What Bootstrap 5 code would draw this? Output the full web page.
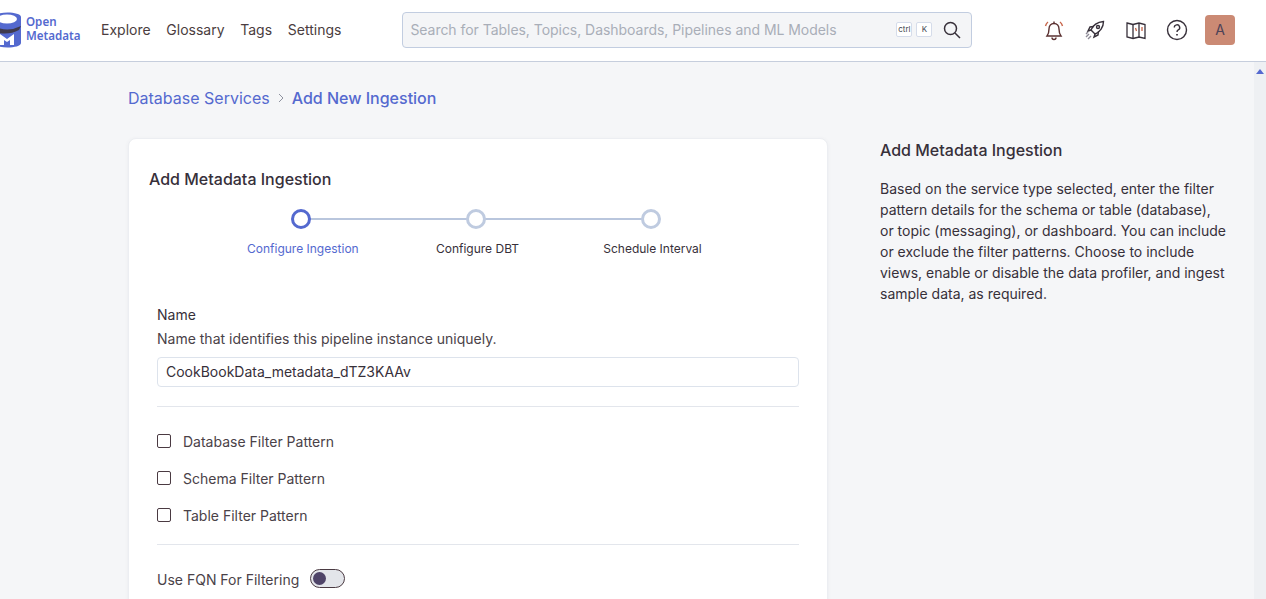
<!DOCTYPE html>
<html lang="en">
<head>
<meta charset="UTF-8">
<title>Add New Ingestion</title>
<link href="https://cdn.jsdelivr.net/npm/bootstrap@5.3.0/dist/css/bootstrap.min.css" rel="stylesheet">
<style>
html, body { height: 100%; overflow: hidden; }
body { font-family: Inter, "Liberation Sans", sans-serif; font-size: 14px; color: #37352f; background: #f5f6f8; }
.app-shell { height: 599px; display: flex; flex-direction: column; overflow: hidden; }
.top-bar { height: 62px; flex: none; background: #fff; border-bottom: 1px solid #c6cedd; padding: 0 31px 2px 0; }
.logo-box { width: 101px; height: 60px; flex: none; overflow: hidden; }
.logo-words { font-family: "Noto Sans", sans-serif; font-weight: 600; font-size: 11.6px; line-height: 14px; color: #5469cf; margin: 0 0 1px 5px; }
.top-link { color: #4a3d40; font-size: 14px; text-decoration: none; }
.top-links { gap: 15.7px; }
.find-box { width: 570px; height: 36px; margin-left: 61px; background: #f4f5f7; border: 1px solid #c2cde0; border-radius: 4px; padding: 0 10px 0 7px; }
.find-text { color: #a9aeb8; font-size: 14px; white-space: nowrap; flex: 1; letter-spacing: -.04px; }
.key-cap { width: 16px; height: 15px; border: 1px solid #d5dcea; border-radius: 2px; font-size: 8px; line-height: 13px; text-align: center; color: #44464f; background: #fff; }
.find-icon { margin-left: 11px; }
.tool-icons { margin-left: auto; gap: 19px; }
.avatar-box { width: 30px; height: 30px; background: #cb8a74; border-radius: 4px; color: #4d4257; font-size: 14px; line-height: 30px; text-align: center; margin-left: -2px; }
.page-body { flex: 1; display: flex; min-height: 0; }
.page-main { flex: 1; min-width: 0; padding: 26px 0 0 128px; }
.scroll-rail { width: 12px; flex: none; background: #eef0f3; position: relative; }
.scroll-arrow { width: 0; height: 0; border-left: 4px solid transparent; border-right: 4px solid transparent; border-bottom: 5px solid #5469cf; margin: 7px 0 0 2px; }
.crumb-row { font-size: 16px; line-height: 20px; color: #5469cf; height: 20px; }
.crumb-sep { margin: 0 8px; }
.crumb-now { font-weight: 500; }
.panel-row { margin-top: 30px; }
.form-panel { width: 700px; flex: none; background: #fff; border: 1px solid #eceef2; border-radius: 8px 8px 0 0; padding: 30px 20px 60px; box-shadow: 0 1px 4px rgba(60, 70, 90, .06); }
.panel-title { font-size: 16px; font-weight: 500; line-height: 20px; color: #37303a; margin: 0; }
.step-track { width: 456px; margin: 20px 0 0 99px; height: 56px; }
.step-cell { width: 175px; position: relative; flex: none; }
.step-cell:last-child { width: 106px; }
.step-dot { width: 20px; height: 20px; border-radius: 50%; border: 3px solid #bfcbe0; background: #fff; position: relative; z-index: 1; margin-left: 43px; }
.step-cell.is-now .step-dot { border-color: #5469cf; }
.step-line { position: absolute; left: 53px; top: 9px; width: 175px; height: 2px; background: #b9c6dd; }
.step-name { position: absolute; top: 32px; left: 1.5px; width: 106px; text-align: center; font-size: 12px; line-height: 16px; white-space: nowrap; color: #37303a; }
.step-cell.is-now .step-name { color: #5469cf; left: -1px; }
.form-area { padding: 0 8px; margin-top: 40px; }
.field-name { line-height: 20px; font-size: 14px; margin-bottom: 4px; color: #37303a; }
.field-help { line-height: 20px; font-size: 14px; color: #4a4248; margin-bottom: 8px; }
.name-input { height: 30px; border: 1px solid #dde3ec; border-radius: 4px; font-size: 14px; padding: 0 8px; color: #37303a; line-height: 28px; }
.rule-line { border: 0; border-top: 1px solid #e3e6ec; opacity: 1; margin: 0; }
.rule-upper { margin: 19px 0 24px; }
.rule-lower { margin: 19px 0 24px; }
.check-row { height: 20px; gap: 12px; margin-bottom: 17px; font-size: 14px; color: #4a4248; }
.check-square { width: 14px; height: 14px; border: 1px solid #4a3a42; border-radius: 2px; flex: none; }
.fqn-row { font-size: 14px; color: #4a4248; }
.toggle-track { width: 35px; height: 19px; border: 1px solid #4a3a42; border-radius: 10px; background: #e3e5ea; padding: 2px; margin: 0 0 2px 11px; }
.toggle-knob { width: 13px; height: 13px; border-radius: 50%; background: #4f4468; }
.side-help { width: 346px; margin-left: 52px; flex: none; color: #37303a; padding-top: 2px; }
.side-title { font-size: 16px; font-weight: 500; line-height: 20px; margin: 0 0 18px; }
.side-copy { font-size: 14px; line-height: 21px; margin: 0; max-width: 346px; }
</style>
</head>
<body>
<div class="app-shell">
  <nav class="top-bar d-flex align-items-center">
    <div class="logo-box d-flex align-items-center">
      <svg width="21" height="36" viewBox="0 0 21 36" style="flex:none">
        <path d="M-6 5 C-6 -1 21 -1 21 5 V31 C21 37 -6 37 -6 31 Z" fill="#5469cf"/>
        <ellipse cx="7" cy="7" rx="10" ry="4.500" fill="#fff"/>
        <path d="M-6 14 Q7 21 21 14 L19 18 Q8 24 -6 20 Z" fill="#3f3a4d"/>
        <path d="M0 33 V22 L7 27 L14 22 V33 H10 V28 L7 30 L4 28 V33 Z" fill="#fff"/>
      </svg>
      <div class="logo-words">Open<br>Metadata</div>
    </div>
    <div class="top-links d-flex">
      <a class="top-link" href="#">Explore</a>
      <a class="top-link" href="#">Glossary</a>
      <a class="top-link" href="#">Tags</a>
      <a class="top-link" href="#">Settings</a>
    </div>
    <div class="find-box d-flex align-items-center">
      <span class="find-text">Search for Tables, Topics, Dashboards, Pipelines and ML Models</span>
      <span class="key-cap me-1">ctrl</span>
      <span class="key-cap">K</span>
      <svg class="find-icon" width="18" height="18" viewBox="0 0 18 18" fill="none" stroke="#37303a" stroke-width="1.5"><circle cx="7.5" cy="7.5" r="6"/><path d="M12 12l5 5"/></svg>
    </div>
    <div class="tool-icons d-flex align-items-center">
      <svg width="22" height="22" viewBox="0 0 22 22" fill="none" stroke="#5a3030" stroke-width="1.4"><path d="M4 17c1.500-2 2-3.500 2-7 0-3.200 2-5.500 5-5.500s5 2.300 5 5.500c0 3.500.5 5 2 7z"/><path d="M9 18.500a2 2 0 0 0 4 0"/><path d="M11 2.500v2"/><path d="M2.500 7c.4-1.700 1.200-3 2.500-4M19.500 7c-.4-1.700-1.200-3-2.500-4" stroke="#c8654a"/></svg>
      <svg width="22" height="22" viewBox="0 0 22 22" fill="none" stroke="#37303a" stroke-width="1.4"><path d="M7 11C9 6 14 3 19.500 2.500 19.500 8 16 13 11 15z"/><circle cx="14" cy="8" r="1.500"/><path d="M7 11l-3 1 2-4 4-.5M11 15l-1 3 4-2 .5-4"/><path d="M5 15l-3 3M7 17l-3 3M4 13l-2 2" stroke="#8d8a96"/></svg>
      <svg width="22" height="22" viewBox="0 0 22 22" fill="none" stroke="#37303a" stroke-width="1.3"><path d="M2 4l6 1.500 6-1.500 6 1.500v14l-6-1.500-6 1.500-6-1.500z"/><path d="M8 5.500v14M14 4v14"/><path d="M10.500 9l1 3M17 8v4" stroke="#c8654a"/></svg>
      <svg width="22" height="22" viewBox="0 0 22 22" fill="none" stroke="#37303a" stroke-width="1.4"><circle cx="11" cy="11" r="9.500"/><path d="M8.300 8.500a2.700 2.700 0 1 1 4 2.400c-.9.500-1.300 1-1.300 2"/><path d="M11 15v1.500" stroke-width="1.700"/></svg>
      <div class="avatar-box">A</div>
    </div>
  </nav>
  <div class="page-body">
    <div class="page-main">
      <div class="crumb-row d-flex align-items-center">
        <span>Database Services</span>
        <svg class="crumb-sep" width="6" height="10" viewBox="0 0 6 10" fill="none" stroke="#8f93a0" stroke-width="1"><path d="M1 1l4 4-4 4"/></svg>
        <span class="crumb-now">Add New Ingestion</span>
      </div>
      <div class="panel-row d-flex">
        <section class="form-panel">
          <h2 class="panel-title">Add Metadata Ingestion</h2>
          <div class="step-track d-flex">
            <div class="step-cell is-now"><div class="step-line"></div><div class="step-dot"></div><div class="step-name">Configure Ingestion</div></div>
            <div class="step-cell"><div class="step-line"></div><div class="step-dot"></div><div class="step-name">Configure DBT</div></div>
            <div class="step-cell"><div class="step-dot"></div><div class="step-name">Schedule Interval</div></div>
          </div>
          <div class="form-area">
            <div class="field-name">Name</div>
            <div class="field-help">Name that identifies this pipeline instance uniquely.</div>
            <div class="name-input">CookBookData_metadata_dTZ3KAAv</div>
            <hr class="rule-line rule-upper">
            <div class="check-row d-flex align-items-center"><span class="check-square"></span>Database Filter Pattern</div>
            <div class="check-row d-flex align-items-center"><span class="check-square"></span>Schema Filter Pattern</div>
            <div class="check-row d-flex align-items-center"><span class="check-square"></span>Table Filter Pattern</div>
            <hr class="rule-line rule-lower">
            <div class="fqn-row d-flex align-items-center">Use FQN For Filtering
              <div class="toggle-track"><div class="toggle-knob"></div></div>
            </div>
          </div>
        </section>
        <aside class="side-help">
          <h3 class="side-title">Add Metadata Ingestion</h3>
          <p class="side-copy">Based on the service type selected, enter the filter pattern details for the schema or table (database), or topic (messaging), or dashboard. You can include or exclude the filter patterns. Choose to include views, enable or disable the data profiler, and ingest sample data, as required.</p>
        </aside>
      </div>
    </div>
    <div class="scroll-rail"><div class="scroll-arrow"></div></div>
  </div>
</div>
<script src="https://cdn.jsdelivr.net/npm/bootstrap@5.3.0/dist/js/bootstrap.bundle.min.js"></script>
</body>
</html>
